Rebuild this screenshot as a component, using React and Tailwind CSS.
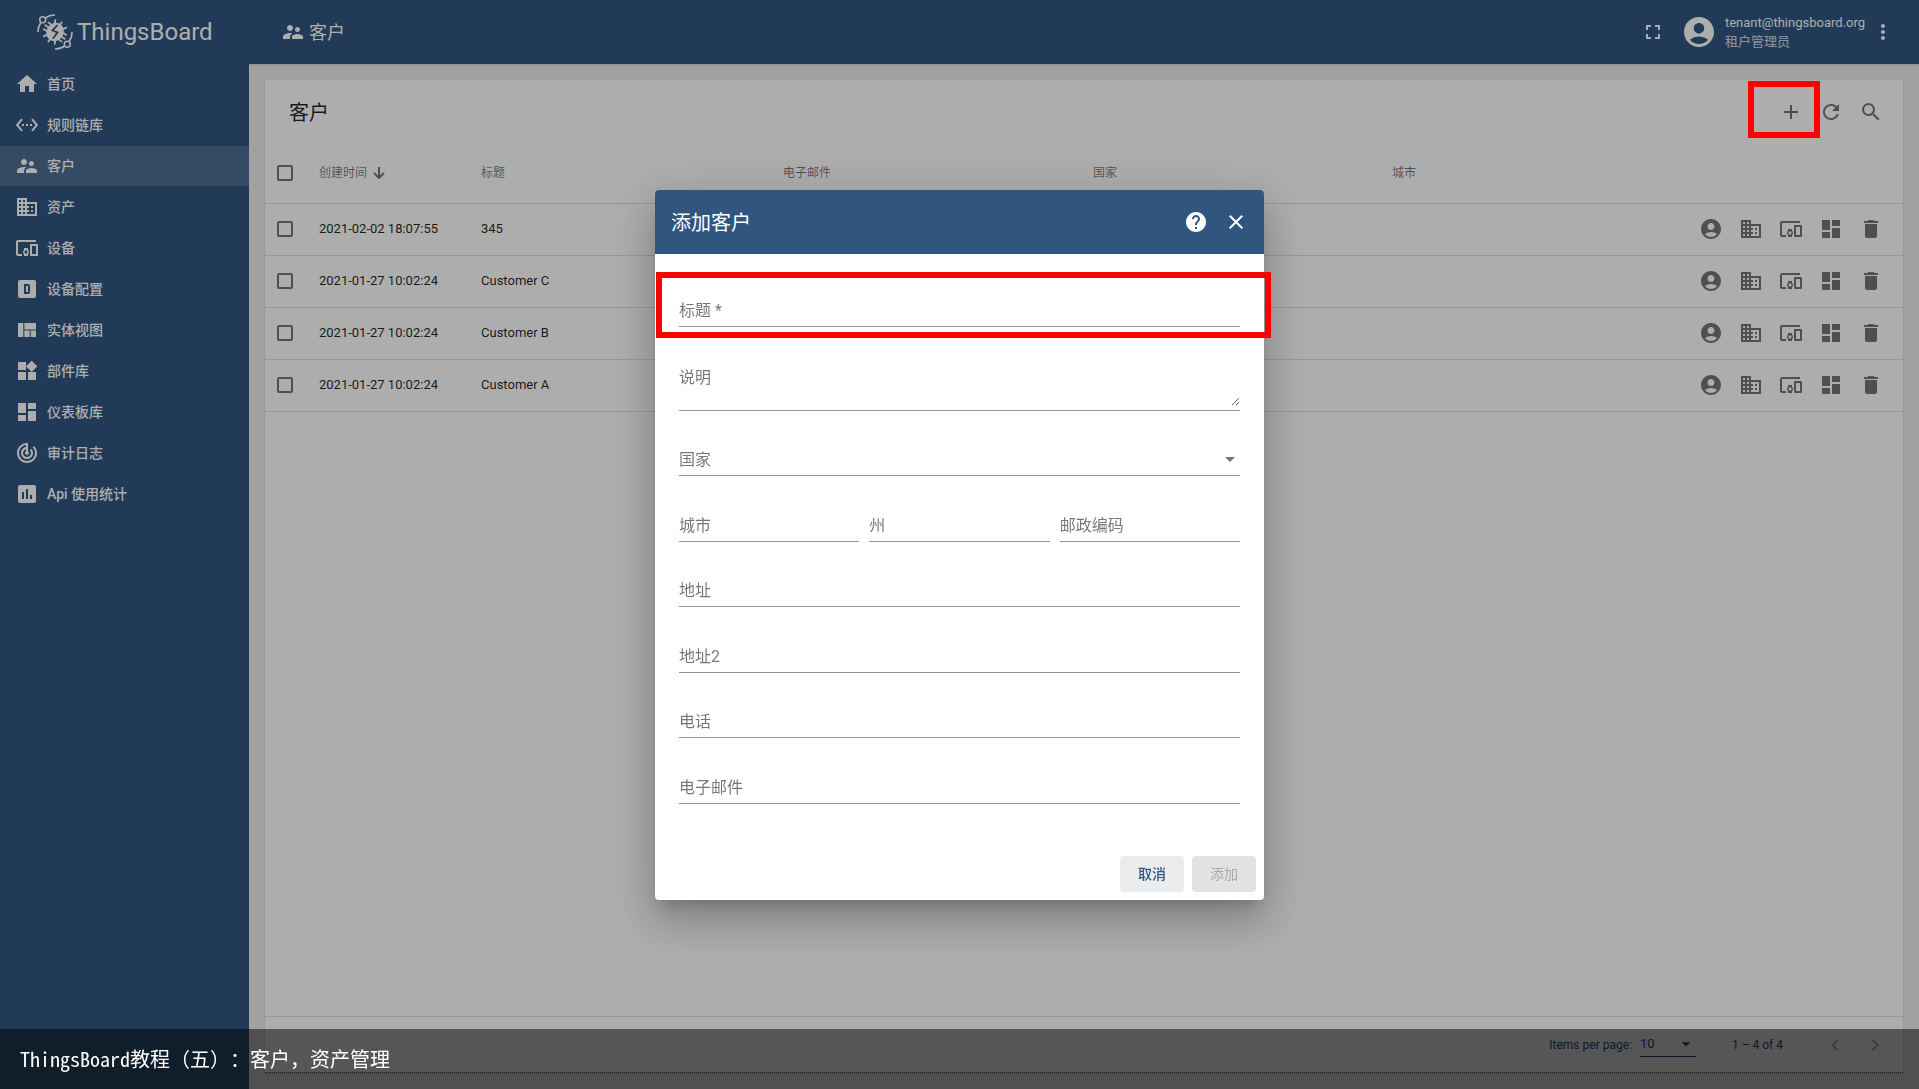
import React from "react";
import {
  MdHome, MdSettingsEthernet, MdSupervisorAccount, MdDomain, MdDevicesOther,
  MdViewQuilt, MdWidgets, MdDashboard, MdTrackChanges, MdInsertChart,
  MdFullscreen, MdAccountCircle, MdMoreVert, MdAdd, MdRefresh, MdSearch,
  MdDelete, MdHelp, MdClose, MdArrowDropDown, MdChevronLeft, MdChevronRight,
} from "react-icons/md";

function DeviceProfileIcon({ className }) {
  return (
    <svg viewBox="0 0 24 24" className={className} fill="currentColor" aria-hidden="true">
      <path fillRule="evenodd" d="M9 7h4a2 2 0 0 1 2 2v6a2 2 0 0 1-2 2H9V7m2 2v6h2V9h-2M5 3h14a2 2 0 0 1 2 2v14a2 2 0 0 1-2 2H5a2 2 0 0 1-2-2V5a2 2 0 0 1 2-2z" />
    </svg>
  );
}

function Logo() {
  return (
    <svg viewBox="0 0 36 36" className="size-9" fill="none" stroke="currentColor" strokeWidth="1.6" aria-hidden="true">
      <circle cx="5.7" cy="5.7" r="3" />
      <circle cx="30.3" cy="30.3" r="3" />
      <path d="M8.400 4C11 2 14 1 18 1M4 8.400C2 11 1 14 1 18M27.600 32C25 34 22 35 18 35M32 27.600C34 25 35 22 35 18" />
      <g transform="rotate(35 18 18)">
        <ellipse cx="18" cy="18" rx="8.500" ry="9.500" fill="currentColor" stroke="none" />
        <path d="M13 11l-2-3.500M18 10V5.500M23 11l2-3.500M13 25l-2 3.500M18 26v4.500M23 25l2 3.500M11 14H6.500M11 18H5.500M11 22H6.500M25 14h4.500M25 18h5.500M25 22h4.500" strokeWidth="1.8" />
      </g>
      <path d="M20.500 11l-5 5.500 5 2-4.500 6" stroke="#305680" strokeWidth="1.8" />
    </svg>
  );
}

const menu = [
  ["首页", MdHome],
  ["规则链库", MdSettingsEthernet],
  ["客户", MdSupervisorAccount],
  ["资产", MdDomain],
  ["设备", MdDevicesOther],
  ["设备配置", DeviceProfileIcon],
  ["实体视图", MdViewQuilt],
  ["部件库", MdWidgets],
  ["仪表板库", MdDashboard],
  ["审计日志", MdTrackChanges],
  ["Api 使用统计", MdInsertChart],
];

const customers = [
  ["2021-02-02 18:07:55", "345"],
  ["2021-01-27 10:02:24", "Customer C"],
  ["2021-01-27 10:02:24", "Customer B"],
  ["2021-01-27 10:02:24", "Customer A"],
];

const rowActions = [
  ["管理用户", MdAccountCircle],
  ["管理资产", MdDomain],
  ["管理设备", MdDevicesOther],
  ["管理仪表板", MdDashboard],
  ["删除", MdDelete],
];

function IconButton({ label, icon: Icon, className = "" }) {
  return (
    <button type="button" aria-label={label} className={`flex size-10 items-center justify-center ${className}`}>
      <Icon className="size-6" />
    </button>
  );
}

function Checkbox({ label }) {
  return (
    <input
      type="checkbox"
      aria-label={label}
      className="block size-4 appearance-none rounded-xs border-2 border-black/54 checked:bg-[#305680]"
    />
  );
}

function Sidebar() {
  return (
    <nav className="flex w-[249px] shrink-0 flex-col bg-[#305680] text-white">
      <a href="#home" className="flex h-16 items-center gap-1 pl-[37px]">
        <Logo />
        <span className="text-2xl">ThingsBoard</span>
      </a>
      <ul className="flex flex-col gap-px">
        {menu.map(([text, Icon]) => (
          <li key={text}>
            <a
              href={`#${text}`}
              className={`flex h-10 items-center gap-2 pl-[15px] text-sm font-medium ${text === "客户" ? "bg-white/15" : ""}`}
            >
              <Icon className="size-6" />
              <span>{text}</span>
            </a>
          </li>
        ))}
      </ul>
    </nav>
  );
}

function TopBar() {
  return (
    <header className="flex h-16 shrink-0 items-center bg-[#305680] pr-6 pl-8 text-white shadow-sm">
      <MdSupervisorAccount className="size-6" />
      <h1 className="ml-1 pt-0.5 text-lg">客户</h1>
      <div className="ml-auto flex items-center">
        <IconButton label="全屏" icon={MdFullscreen} />
        <MdAccountCircle className="ml-2 size-9" />
        <div className="ml-2 text-[13px] leading-[19px]">
          <p>tenant@thingsboard.org</p>
          <p className="text-white/80">租户管理员</p>
        </div>
        <button type="button" aria-label="更多" className="ml-1.5 flex h-10 w-6 items-center justify-center">
          <MdMoreVert className="size-6" />
        </button>
      </div>
    </header>
  );
}

function CustomerTable() {
  return (
    <table className="w-full table-fixed border-collapse text-left text-[13px] text-black/87">
      <colgroup>
        <col className="w-[54px]" />
        <col className="w-[162px]" />
        <col className="w-[302px]" />
        <col className="w-[310px]" />
        <col className="w-[299px]" />
        <col />
        <col className="w-[212px]" />
      </colgroup>
      <thead>
        <tr className="h-[59px] border-b border-black/12 text-xs text-black/54">
          <th className="pl-3"><Checkbox label="全选" /></th>
          <th className="font-normal">
            <button type="button" className="flex items-center gap-1.5">
              创建时间
              <svg viewBox="0 0 12 12" className="size-3" fill="none" stroke="currentColor" strokeWidth="2" aria-hidden="true">
                <path d="M6 0v10M1 6l5 5 5-5" />
              </svg>
            </button>
          </th>
          <th className="font-normal">标题</th>
          <th className="font-normal">电子邮件</th>
          <th className="font-normal">国家</th>
          <th className="font-normal">城市</th>
          <th aria-label="操作" />
        </tr>
      </thead>
      <tbody>
        {customers.map(([time, title]) => (
          <tr key={title} className="h-[52px] border-b border-black/12">
            <td className="pl-3"><Checkbox label={title} /></td>
            <td>{time}</td>
            <td>{title}</td>
            <td />
            <td />
            <td />
            <td>
              <div className="flex text-black/54">
                {rowActions.map(([label, icon]) => (
                  <IconButton key={label} label={label} icon={icon} />
                ))}
              </div>
            </td>
          </tr>
        ))}
      </tbody>
    </table>
  );
}

function Paginator() {
  return (
    <footer className="mt-auto flex h-14 items-center justify-end border-t border-black/12 pr-2 text-xs text-[#2b4c85]">
      <label htmlFor="page-size">Items per page:</label>
      <div className="ml-2 grid w-14 items-center border-b">
        <select id="page-size" className="h-6 appearance-none text-[13px] [grid-area:1/1]">
          <option>10</option>
        </select>
        <MdArrowDropDown className="pointer-events-none size-5 justify-self-end [grid-area:1/1]" />
      </div>
      <span className="mr-8 ml-9">1 – 4 of 4</span>
      <IconButton label="上一页" icon={MdChevronLeft} className="opacity-40" />
      <IconButton label="下一页" icon={MdChevronRight} className="opacity-40" />
    </footer>
  );
}

function Field({ id, label, tall = false, select = false }) {
  const control = "w-full appearance-none bg-transparent text-base outline-none [grid-area:1/1]";
  return (
    <div className={`grid border-b border-black/42 ${tall ? "pb-1" : ""}`}>
      <label htmlFor={id} className="pointer-events-none self-start text-base leading-[26px] text-black/54 [grid-area:1/1]">
        {label}
      </label>
      {tall && <textarea id={id} className={`${control} block h-[41px] resize-y`} />}
      {select && (
        <>
          <select id={id} className={`${control} h-7`}>
            <option value="" />
          </select>
          <MdArrowDropDown className="pointer-events-none -mr-0.5 size-6 justify-self-end text-black/54 [grid-area:1/1]" />
        </>
      )}
      {!tall && !select && <input id={id} type="text" className={`${control} h-7`} />}
    </div>
  );
}

function AddCustomerDialog() {
  return (
    <div className="fixed inset-0 flex items-center justify-center bg-black/32">
      <form
        role="dialog"
        aria-labelledby="dialog-title"
        className="relative w-[609px] rounded bg-white shadow-[0_11px_15px_-7px_rgba(0,0,0,0.2),0_24px_38px_3px_rgba(0,0,0,0.14),0_9px_46px_8px_rgba(0,0,0,0.12)]"
      >
        <div className="flex h-16 items-center rounded-t bg-[#305680] pr-2 pl-4 text-white">
          <h2 id="dialog-title" className="mr-auto pt-0.5 text-xl">添加客户</h2>
          <IconButton label="帮助" icon={MdHelp} />
          <IconButton label="关闭" icon={MdClose} />
        </div>
        <div className="px-6 pt-11">
          <Field id="title" label="标题 *" />
          <div className="mt-[38px]">
            <Field id="description" label="说明" tall />
          </div>
          <div className="grid h-[393px] grid-rows-6 items-end">
            <Field id="country" label="国家" select />
            <div className="grid grid-cols-3 gap-2.5">
              <Field id="city" label="城市" />
              <Field id="state" label="州" />
              <Field id="zip" label="邮政编码" />
            </div>
            <Field id="address" label="地址" />
            <Field id="address2" label="地址2" />
            <Field id="phone" label="电话" />
            <Field id="email" label="电子邮件" />
          </div>
        </div>
        <div className="mt-[52px] flex justify-end gap-2 px-2 pb-2 text-sm">
          <button type="button" className="h-9 w-16 rounded bg-[#ebecee] font-medium text-[#305680]">取消</button>
          <button type="submit" disabled className="h-9 w-16 rounded bg-[#e1e2e4] text-black/26">添加</button>
        </div>
        <div className="pointer-events-none absolute top-[82px] -right-[7px] left-px h-[66px] border-6 border-[#ff0000]" />
      </form>
    </div>
  );
}

export default function App() {
  return (
    <div className="flex h-screen bg-[#eeeeee] font-['Roboto','Noto_Sans_CJK_SC',sans-serif]">
      <Sidebar />
      <div className="flex min-w-0 grow flex-col">
        <TopBar />
        <main className="flex grow flex-col p-4">
          <section className="flex grow flex-col border-b border-dotted border-[#2b4c85] bg-white shadow">
            <div className="flex h-16 items-center pr-3 pl-6">
              <h2 className="mr-auto pt-0.5 text-xl text-black/87">客户</h2>
              <div className="flex text-black/54">
                <IconButton label="添加客户" icon={MdAdd} />
                <IconButton label="刷新" icon={MdRefresh} />
                <IconButton label="搜索" icon={MdSearch} />
              </div>
            </div>
            <CustomerTable />
            <Paginator />
          </section>
        </main>
      </div>
      <AddCustomerDialog />
      <div className="pointer-events-none fixed top-[81px] right-[99px] h-[57px] w-[72px] border-6 border-[#ff0000]" />
      <p className="fixed inset-x-0 bottom-0 flex h-15 items-center bg-black/50 pl-5 font-['Noto_Sans_Mono_CJK_SC','Noto_Sans_CJK_SC',sans-serif] text-xl text-white [text-spacing-trim:space-all]">
        ThingsBoard教程（五）：客户，资产管理
      </p>
    </div>
  );
}
